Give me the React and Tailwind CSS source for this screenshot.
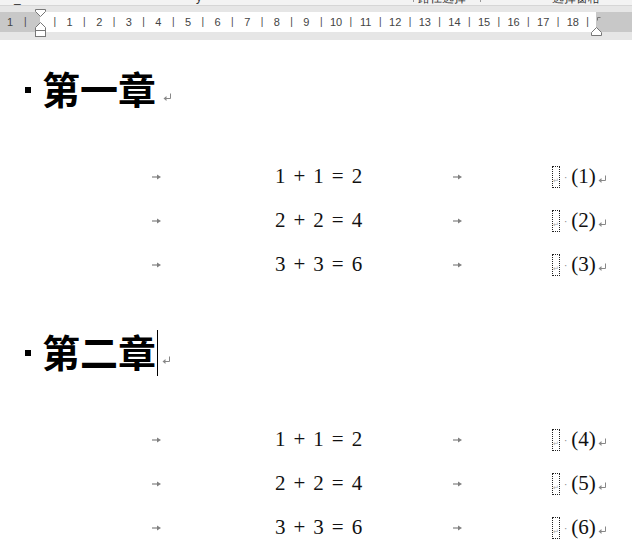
import React from "react";

const U = 29.6;
const ORIGIN = 40;

const Ruler = () => {
  const marks = [];
  for (let k = 1; k <= 37; k++) {
    const x = ORIGIN + (k * U) / 2;
    if (x > 592) break;
    marks.push({ x, label: k % 2 === 0 ? String(k / 2) : "|" });
  }
  return (
    <div className="relative h-[20px] bg-white">
      <div className="absolute left-0 top-0 h-full w-[40px] bg-[#c8c8c8]" />
      <div className="absolute left-[596px] top-0 h-full w-[36px] bg-[#c8c8c8]" />
      <span className="absolute top-[3px] left-[7px] text-[11px] leading-[14px] text-[#444]">1</span>
      <span className="absolute top-[3px] left-[24px] text-[10px] leading-[14px] text-[#444]">|</span>
      {marks.map((m, i) => (
        <span
          key={i}
          className={
            "absolute top-[3px] -translate-x-1/2 leading-[14px] text-[#444] " +
            (m.label === "|" ? "text-[10px]" : "text-[11px]")
          }
          style={{ left: m.x }}
        >
          {m.label}
        </span>
      ))}
      {/* indent markers */}
      <svg className="absolute left-[34px] top-[-3px]" width="13" height="30" viewBox="0 0 13 30">
        <path d="M1.5 0.5 H11.5 V2.5 L6.5 7.5 L1.5 2.5 Z" fill="#fff" stroke="#777" />
        <path d="M6.5 13.5 L11.5 18.5 V21.5 H1.5 V18.5 Z" fill="#fff" stroke="#777" />
        <rect x="1.5" y="21.5" width="10" height="6" fill="#fff" stroke="#777" />
      </svg>
      <svg className="absolute left-[590px] top-[2px]" width="14" height="26" viewBox="0 0 14 26">
        <path d="M7.5 6.5 V3.5 H10.5" fill="none" stroke="#777" />
        <path d="M6.5 13.5 L11.5 18.5 V21.5 H1.5 V18.5 Z" fill="#fff" stroke="#777" />
      </svg>
    </div>
  );
};

const Para = () => (
  <svg width="9" height="8" viewBox="0 0 9 8" className="block">
    <path d="M7.5 0.5 V5.5 H1.5" fill="none" stroke="#888" />
    <path d="M0.5 5.5 L3.5 3 V8 Z" fill="#888" />
  </svg>
);

const Tab = () => (
  <svg width="9" height="6" viewBox="0 0 9 6" className="block">
    <path d="M0 3 H6" stroke="#808080" strokeWidth="1.2" />
    <path d="M5 0.5 L9 3 L5 5.5 Z" fill="#808080" />
  </svg>
);

const Eq = ({ a, c }) => (
  <div className="flex items-center gap-[8px] text-[21px] text-[#111]" style={{ fontFamily: '"Liberation Serif", serif' }}>
    <span>{a}</span>
    <span>+</span>
    <span>{a}</span>
    <span>=</span>
    <span>{c}</span>
  </div>
);

const Row = ({ a, c, n }) => (
  <div className="flex h-[44px] items-center">
    <span className="ml-[152px] w-[123px]">
      <Tab />
    </span>
    <div className="w-[178px]">
      <Eq a={a} c={c} />
    </div>
    <span className="w-[99px]">
      <Tab />
    </span>
    <div className="flex items-center">
      <div className="flex h-[22px] w-[8px] items-end justify-center border border-dotted border-[#222]">
        <span className="mb-[2px] text-[7px] leading-[8px] text-[#aaa]">↵</span>
      </div>
      <span className="mx-[4px] text-[10px] text-[#888]">·</span>
      <span className="text-[21px] text-[#111]" style={{ fontFamily: '"Liberation Serif", serif' }}>
        ({n})
      </span>
      <span className="ml-[2px] mt-[4px]">
        <Para />
      </span>
    </div>
  </div>
);

const Heading = ({ text, cursor }) => (
  <div className="flex h-[60px] items-center">
    <span className="ml-[25px] h-[6px] w-[6px] bg-black" />
    <span
      className="-mt-[5px] ml-[11px] text-[38px] font-bold leading-none text-black"
      style={{ fontFamily: '"Noto Sans CJK SC", sans-serif' }}
    >
      {text}
    </span>
    {cursor ? <span className="ml-[1px] h-[46px] w-[1px] bg-black" /> : null}
    <span className={(cursor ? "ml-[4px]" : "ml-[7px]") + " mt-[14px]"}>
      <Para />
    </span>
  </div>
);

export default function App() {
  return (
    <div className="w-[632px] h-[557px] overflow-hidden bg-white" style={{ fontFamily: '"Liberation Sans", sans-serif' }}>
      <div className="relative h-[6px] overflow-hidden border-b border-[#d6d6d6] bg-[#f3f3f3]">
        <span className="absolute left-[14px] top-[-11px] text-[12px] text-[#333]">_</span>
        <span className="absolute left-[196px] top-[-12px] text-[12px] text-[#333]">y</span>
        <span className="absolute left-[413px] top-[-10px] h-[12px] w-[1px] bg-[#999]" />
        <span className="absolute left-[418px] top-[-11px] text-[12px] text-[#333]">路径选择</span>
        <span className="absolute left-[480px] top-[-10px] h-[12px] w-[1px] bg-[#999]" />
        <span className="absolute left-[552px] top-[-11px] text-[12px] text-[#333]">选择窗格</span>
      </div>
      <div className="h-[6px] bg-[#e6e6e6]" />
      <Ruler />
      <div className="h-[8px] bg-[#e6e6e6]" />
      <div className="pt-[20px]">
        <Heading text="第一章" />
        <div className="mt-[35px]">
          <Row a="1" c="2" n="1" />
          <Row a="2" c="4" n="2" />
          <Row a="3" c="6" n="3" />
        </div>
        <div className="mt-[36px]">
          <Heading text="第二章" cursor />
        </div>
        <div className="mt-[35px]">
          <Row a="1" c="2" n="4" />
          <Row a="2" c="4" n="5" />
          <Row a="3" c="6" n="6" />
        </div>
      </div>
    </div>
  );
}
